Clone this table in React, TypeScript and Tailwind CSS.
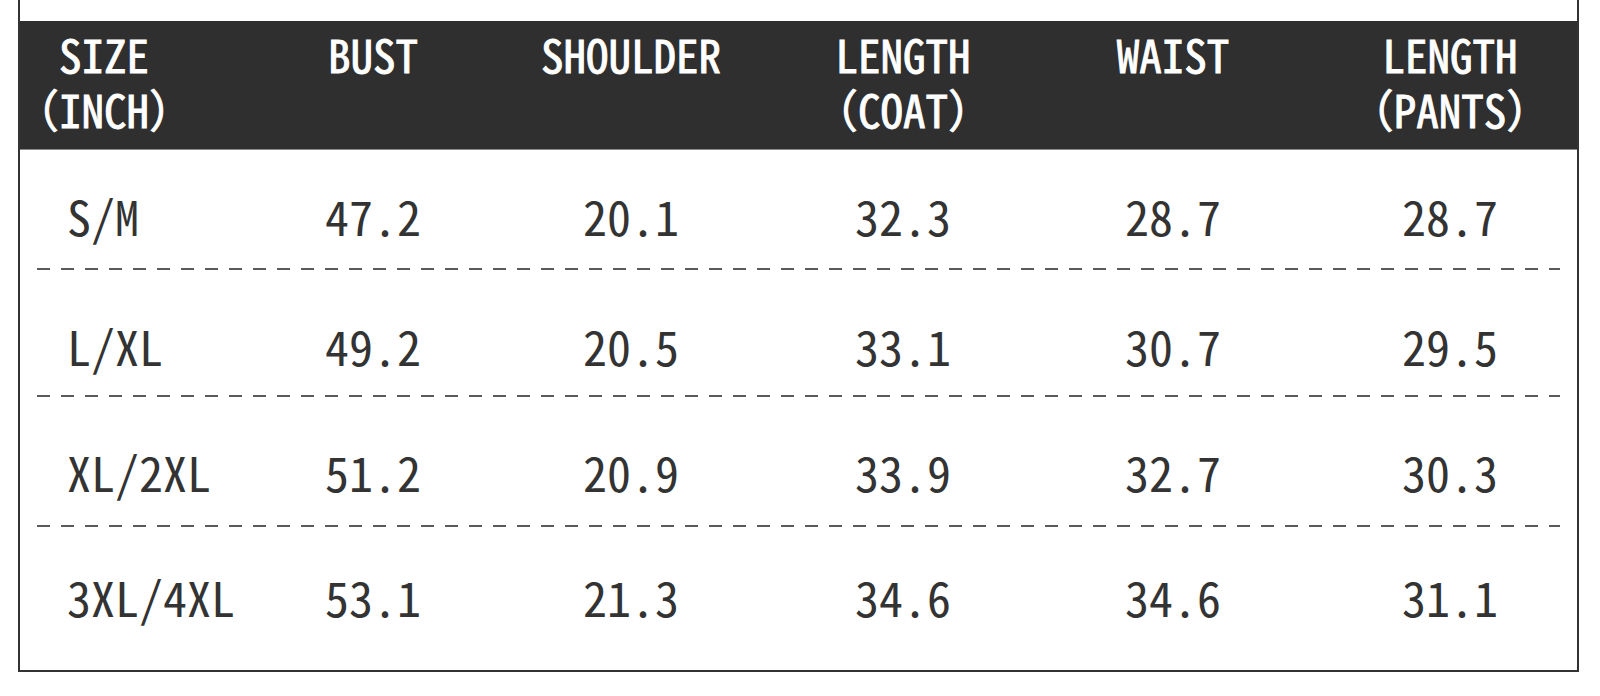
const fontStack = '"Noto Sans Mono CJK SC", "DejaVu Sans Mono", "Noto Sans CJK SC", monospace';

type Row = { size: string; values: string[]; height: string; pad: string };

const rows: Row[] = [
    { size: "S/M", values: ["47.2", "20.1", "32.3", "28.7", "28.7"], height: "h-[118px]", pad: "pt-[11px]" },
    { size: "L/XL", values: ["49.2", "20.5", "33.1", "30.7", "29.5"], height: "h-[125px]", pad: "pt-[25px]" },
    { size: "XL/2XL", values: ["51.2", "20.9", "33.9", "32.7", "30.3"], height: "h-[128px]", pad: "pt-[19px]" },
    { size: "3XL/4XL", values: ["53.1", "21.3", "34.6", "34.6", "31.1"], height: "h-[143px]", pad: "pb-[5px]" },
];

const headers = ["BUST", "SHOULDER", "LENGTH\n（COAT）", "WAIST", "LENGTH\n（PANTS）"];

function DashedLine() {
    return (
        <div className="px-[17px]">
            <div className="h-[2px] w-full bg-[repeating-linear-gradient(90deg,#5a5a5a_0_13px,transparent_13px_24px)]" />
        </div>
    );
}

export default function App() {
    return (
        <div className="w-[1600px] h-[696px] bg-white overflow-hidden" style={{ fontFamily: fontStack }}>
            <div className="ml-[18px] w-[1561px] border-x-2 border-b-2 border-[#333]">
                <div className="h-[21px]" />

                {/* header */}
                <div className="grid grid-cols-[228px_250px_266px_278px_262px_1fr] h-[129px] bg-[#2f2f2f] border-b border-[#8a8a8a] text-white font-normal [-webkit-text-stroke:0.9px_white] text-[45px] leading-[55px] pt-[5px]">
                    <div className="w-[168px] flex justify-center">
                        <span className="shrink-0 text-center whitespace-pre">{"SIZE\n（INCH）"}</span>
                    </div>
                    {headers.map((h, i) => (
                        <div key={i} className={`text-center whitespace-pre-line ${i === 4 ? "pl-[19px]" : ""}`}>
                            {h}
                        </div>
                    ))}
                </div>

                {/* body */}
                {rows.map((row, r) => (
                    <div key={row.size}>
                        <div className={`grid grid-cols-[228px_250px_266px_278px_262px_1fr] items-center text-[48px] leading-none text-[#333] ${row.height} ${row.pad}`}>
                            <div className="pl-[47px]">{row.size}</div>
                            {row.values.map((v, i) => (
                                <div key={i} className={`text-center ${i === 4 ? "pl-[19px]" : ""}`}>
                                    {v}
                                </div>
                            ))}
                        </div>
                        {r < rows.length - 1 ? <DashedLine /> : null}
                    </div>
                ))}
            </div>
        </div>
    );
}
